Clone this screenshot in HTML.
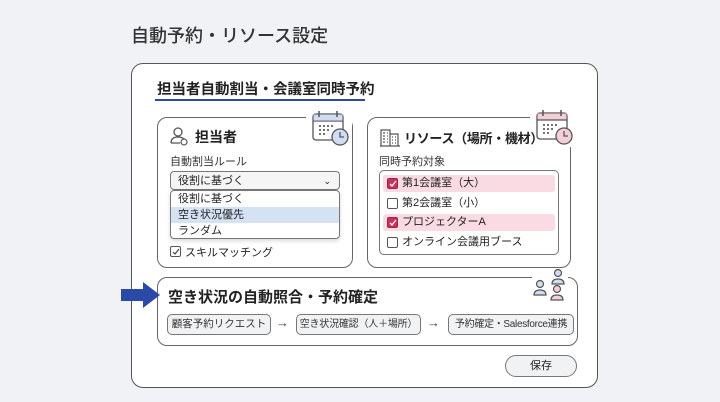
<!DOCTYPE html>
<html><head><meta charset="utf-8"><style>
*{box-sizing:border-box;margin:0;padding:0}
body{width:720px;height:402px;background:#f0f2f5;font-family:"Liberation Sans","Noto Sans CJK JP",sans-serif;color:#222;position:relative;overflow:hidden}
.a{position:absolute}
.title{left:131px;top:22px;font-size:18px;font-weight:500;color:#333;white-space:nowrap}
.card{left:131px;top:63px;width:467px;height:325px;background:#fff;border:1.5px solid #555;border-radius:12px}
.panel{border:1.3px solid #666;border-radius:10px;background:#fff}
.t{white-space:nowrap}
.cb{width:11px;height:11px;border:1px solid #555;border-radius:2px;background:#fff}
.cbp{background:#c9305a;border-color:#a02448}
.chip{height:21px;border:1px solid #777;border-radius:5px;background:#f1f2f4;font-size:10.5px;line-height:19px;text-align:center;color:#333;white-space:nowrap;overflow:hidden}
</style></head><body>
<div class="a title">自動予約・リソース設定</div>
<div class="a card"></div>
<div class="a t" style="left:157px;top:78px;font-size:14.5px;font-weight:700">担当者自動割当・会議室同時予約</div>
<div class="a" style="left:155px;top:99px;width:210px;height:2px;background:#2b4aa0"></div>

<!-- left panel -->
<div class="a panel" style="left:157px;top:117px;width:196px;height:151px"></div>
<svg class="a" style="left:306px;top:108px" width="46" height="40" viewBox="0 0 46 40">
<rect x="0" y="0" width="46" height="40" fill="#fff"/>
<rect x="7" y="6" width="30" height="26" rx="3" fill="#fff" stroke="#555" stroke-width="1.3"/>
<path d="M7 13h30" stroke="#555" stroke-width="1.3"/><rect x="7.6" y="6.6" width="28.8" height="6" fill="#cfdcf2"/>
<path d="M13 3v6M31 3v6" stroke="#555" stroke-width="1.5"/>
<g fill="#444"><circle cx="14" cy="18" r="1"/><circle cx="18" cy="18" r="1"/><circle cx="22" cy="18" r="1"/><circle cx="26" cy="18" r="1"/><circle cx="14" cy="22" r="1"/><circle cx="18" cy="22" r="1"/><circle cx="22" cy="22" r="1"/><circle cx="14" cy="26" r="1"/><circle cx="18" cy="26" r="1"/></g>
<circle cx="34" cy="29" r="8" fill="#cfdcf2" stroke="#555" stroke-width="1.3"/><path d="M34 24v5h4" stroke="#555" stroke-width="1.3" fill="none"/>
</svg>
<svg class="a" style="left:169px;top:126px" width="22" height="20" viewBox="0 0 22 20"><circle cx="9" cy="6" r="4" fill="none" stroke="#555" stroke-width="1.3"/><path d="M2 17c0-5 4-6 7-6s5 1 6 2M2 17h9" fill="none" stroke="#555" stroke-width="1.3"/><circle cx="15" cy="16" r="3" fill="none" stroke="#555" stroke-width="1.2"/></svg>
<div class="a t" style="left:195px;top:127px;font-size:14px;font-weight:700">担当者</div>
<div class="a t" style="left:170px;top:153px;font-size:11px;color:#333">自動割当ルール</div>
<div class="a" style="left:170px;top:171px;width:170px;height:19px;border:1px solid #777;border-radius:4px;background:#f5f5f6;font-size:11px;line-height:18px;padding-left:7px">役割に基づく<span style="position:absolute;right:8px;top:0;font-size:9px">⌄</span></div>
<div class="a" style="left:170px;top:190px;width:170px;height:49px;border:1px solid #777;border-radius:4px;background:#fff;box-shadow:0 2px 4px rgba(0,0,0,.15);font-size:11px;line-height:16px;overflow:hidden">
<div style="padding-left:7px;height:16px">役割に基づく</div>
<div style="padding-left:7px;height:16px;background:#d5e2f4">空き状況優先</div>
<div style="padding-left:7px;height:16px">ランダム</div></div>
<div class="a cb" style="left:170px;top:246px"></div>
<svg class="a" style="left:171px;top:247px" width="10" height="10"><path d="M2 5l2 2 4-5" stroke="#444" stroke-width="1.2" fill="none"/></svg>
<div class="a t" style="left:185px;top:244px;font-size:11px">スキルマッチング</div>

<!-- right panel -->
<div class="a panel" style="left:367px;top:117px;width:204px;height:151px"></div>
<svg class="a" style="left:530px;top:107px" width="46" height="40" viewBox="0 0 46 40">
<rect x="0" y="0" width="46" height="40" fill="#fff"/>
<rect x="7" y="6" width="30" height="26" rx="3" fill="#fff" stroke="#555" stroke-width="1.3"/>
<rect x="7.6" y="6.6" width="28.8" height="6" fill="#f5cfd8"/><path d="M7 13h30" stroke="#555" stroke-width="1.3"/>
<path d="M13 3v6M31 3v6" stroke="#555" stroke-width="1.5"/>
<g fill="#444"><circle cx="14" cy="18" r="1"/><circle cx="18" cy="18" r="1"/><circle cx="22" cy="18" r="1"/><circle cx="26" cy="18" r="1"/><circle cx="14" cy="22" r="1"/><circle cx="18" cy="22" r="1"/><circle cx="22" cy="22" r="1"/><circle cx="14" cy="26" r="1"/><circle cx="18" cy="26" r="1"/></g>
<circle cx="34" cy="29" r="8" fill="#f5cfd8" stroke="#555" stroke-width="1.3"/><path d="M34 24v5h4" stroke="#555" stroke-width="1.3" fill="none"/>
</svg>
<svg class="a" style="left:379px;top:127px" width="22" height="20" viewBox="0 0 22 20"><path d="M2 19V3h9v16M11 7h8v12M1 19h20" fill="none" stroke="#555" stroke-width="1.2"/><path d="M4 6h2M8 6h1M4 9h2M8 9h1M4 12h2M8 12h1M4 15h2M8 15h1M13 10h1M16 10h1M13 13h1M16 13h1M13 16h1M16 16h1" stroke="#555" stroke-width="1.2"/></svg>
<div class="a t" style="left:404px;top:128px;font-size:13px;font-weight:700;letter-spacing:-0.3px">リソース（場所・機材）</div>
<div class="a t" style="left:379px;top:153px;font-size:11px;color:#333">同時予約対象</div>
<div class="a" style="left:379px;top:170px;width:180px;height:85px;border:1px solid #777;border-radius:5px;background:#fff"></div>
<div class="a" style="left:383px;top:175px;width:172px;height:17px;background:#fadbe3;border-radius:3px"></div>
<div class="a" style="left:383px;top:214px;width:172px;height:17px;background:#fadbe3;border-radius:3px"></div>
<div class="a cb cbp" style="left:387px;top:178px"></div>
<div class="a cb" style="left:387px;top:198px"></div>
<div class="a cb cbp" style="left:387px;top:217px"></div>
<div class="a cb" style="left:387px;top:237px"></div>
<svg class="a" style="left:388px;top:179px" width="10" height="50"><path d="M2 5l2 2 4-5M2 44l2 2 4-5" stroke="#fff" stroke-width="1.3" fill="none"/></svg>
<div class="a t" style="left:402px;top:174px;font-size:11px;line-height:19.5px">第1会議室（大）<br>第2会議室（小）<br>プロジェクターA<br>オンライン会議用ブース</div>

<!-- bottom -->
<div class="a panel" style="left:157px;top:277px;width:421px;height:69px"></div>
<svg class="a" style="left:528px;top:266px" width="42" height="38" viewBox="0 0 42 38"><rect x="4" y="2" width="36" height="34" fill="#fff"/>
<circle cx="30" cy="7" r="3.5" fill="#cfdcf2" stroke="#555" stroke-width="1.2"/><path d="M24 18c0-4 3-5 6-5s6 1 6 5z" fill="#cfdcf2" stroke="#555" stroke-width="1.2"/>
<circle cx="12" cy="18" r="3.5" fill="#cfdcf2" stroke="#555" stroke-width="1.2"/><path d="M6 29c0-4 3-5 6-5s6 1 6 5z" fill="#cfdcf2" stroke="#555" stroke-width="1.2"/>
<circle cx="29" cy="23" r="3.5" fill="#f5cfd8" stroke="#555" stroke-width="1.2"/><path d="M23 34c0-4 3-5 6-5s6 1 6 5z" fill="#f5cfd8" stroke="#555" stroke-width="1.2"/></svg>
<svg class="a" style="left:121px;top:281px" width="40" height="28"><path d="M0 8h22V1l17 13-17 13v-7H0z" fill="#2b4aa8"/></svg>
<div class="a t" style="left:168px;top:286px;font-size:15px;font-weight:700">空き状況の自動照合・予約確定</div>
<div class="a chip" style="left:167px;top:314px;width:104px">顧客予約リクエスト</div>
<div class="a t" style="left:276px;top:315px;font-size:13px;color:#444">→</div>
<div class="a chip" style="left:296px;top:314px;width:125px;font-size:10px;letter-spacing:-0.2px">空き状況確認（人＋場所）</div>
<div class="a t" style="left:427px;top:315px;font-size:13px;color:#444">→</div>
<div class="a chip" style="left:448px;top:314px;width:126px;font-size:10px;letter-spacing:-.3px">予約確定・Salesforce連携</div>
<div class="a" style="left:505px;top:355px;width:72px;height:22px;border:1px solid #777;border-radius:11px;background:#f1f2f4;font-size:11px;line-height:20px;text-align:center">保存</div>
</body></html>
